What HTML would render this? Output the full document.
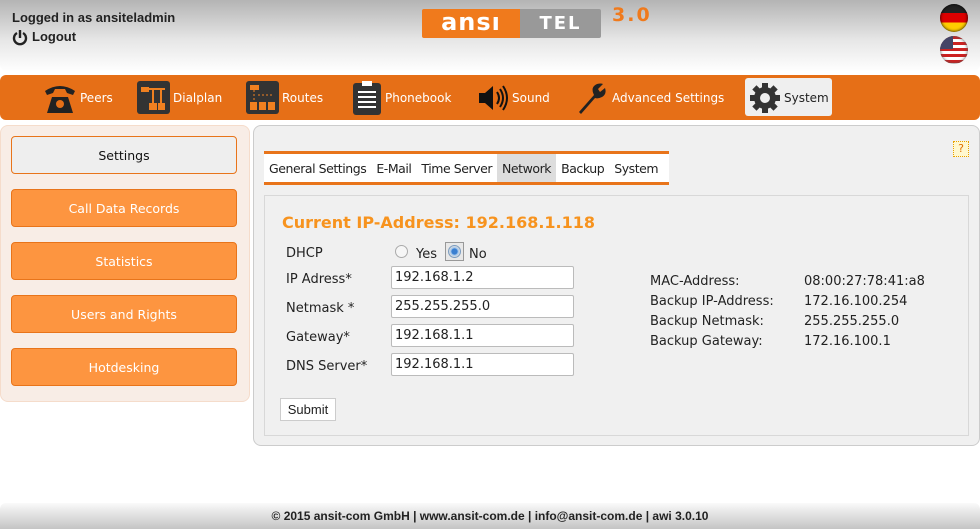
<!DOCTYPE html>
<html><head><meta charset="utf-8"><style>
*{box-sizing:border-box;margin:0;padding:0}
body{width:980px;height:529px;overflow:hidden;background:#fff;font-family:"DejaVu Sans",Verdana,sans-serif;font-size:13px;color:#222;position:relative}
.hdr{position:absolute;left:0;top:0;width:980px;height:72px;background:linear-gradient(#b4b4b4,#e6e6e6 55%,#fff);border-radius:0 0 8px 8px}
.b{font-family:"Liberation Sans",sans-serif;font-weight:bold;font-size:13px;position:absolute;white-space:nowrap}
.nav{position:absolute;left:0;top:75px;width:980px;height:45px;background:#e66f17;border-radius:6px}
.ni{position:absolute;top:0;height:45px;display:flex;align-items:center;color:#fff;font-size:12px;white-space:nowrap}
.ni svg{margin-right:3px}
.sys{position:absolute;left:745px;top:78px;width:87px;height:38px;background:#efefef;border-radius:3px}
.side{position:absolute;left:0;top:125px;width:250px;height:277px;background:#f8ede6;border:1px solid #f5dccb;border-radius:8px}
.btn{position:absolute;left:11px;width:226px;height:38px;background:#fd9540;border:1px solid #e8741a;border-radius:4px;color:#fff;text-align:center;line-height:38px;font-size:12.5px}
.main{position:absolute;left:253px;top:125px;width:727px;height:321px;background:#f0f0f0;border:1px solid #ccc;border-radius:8px}
.tabs{position:absolute;left:264px;top:151px;width:405px;height:34px;background:#fff;border-top:3px solid #e8741a;border-bottom:3px solid #e8741a;display:flex;align-items:center;white-space:nowrap;font-size:12.5px;letter-spacing:-0.45px;overflow:hidden}
.tabs span{padding:0 5px;height:28px;line-height:30px}
.inner{position:absolute;left:264px;top:195px;width:705px;height:241px;border:1px solid #d8d8d8}
.lbl{position:absolute;left:286px}
.inp{position:absolute;left:391px;width:183px;height:23px;background:#fff;border:1px solid #bbb;border-radius:2px;padding-left:3px;line-height:21px}
.r{position:absolute;left:650px}.r2{position:absolute;left:804px}
</style></head><body>
<div class="hdr"></div>
<div class="b" style="left:12px;top:10px">Logged in as ansiteladmin</div>
<svg style="position:absolute;left:12px;top:29px" width="16" height="17" viewBox="0 0 16 17"><path d="M5 4A6 6 0 1 0 11 4" fill="none" stroke="#222" stroke-width="2.4"/><path d="M8 1V9" stroke="#222" stroke-width="2.4"/></svg>
<div class="b" style="left:32px;top:29px">Logout</div>
<div style="position:absolute;left:422px;top:9px;width:98px;height:29px;background:#f07a1c;border-radius:2px 0 0 2px;color:#fff;font:bold 24px 'DejaVu Sans',sans-serif;line-height:27px;text-align:center;letter-spacing:1px">ansı</div>
<div style="position:absolute;left:520px;top:9px;width:81px;height:29px;background:#999;border-radius:0 2px 2px 0;color:#fff;font:bold 18px 'DejaVu Sans',sans-serif;line-height:29px;text-align:center;letter-spacing:2px">TEL</div>
<div style="position:absolute;left:612px;top:4px;color:#f07a1c;font:bold 19px 'DejaVu Sans',sans-serif;letter-spacing:2px">3.0</div>
<div style="position:absolute;left:940px;top:4px;width:28px;height:28px;border-radius:50%;background:linear-gradient(#222 33%,#d00 33%,#d00 66%,#fc0 66%);box-shadow:inset 0 0 3px #000"></div>
<div style="position:absolute;left:940px;top:36px;width:28px;height:28px;border-radius:50%;background:repeating-linear-gradient(#c22 0 3px,#fff 3px 6px);box-shadow:inset 0 0 3px #555;overflow:hidden"><div style="width:13px;height:13px;background:#446"></div></div>
<div class="nav"></div>
<div class="sys"></div>
<div class="ni" style="left:43px;top:75px"><svg width="34" height="34" viewBox="0 0 34 34"><path d="M2 10Q17 0 32 10L30 14L24 12L22 8H12L10 12L4 14Z" fill="#222"/><path d="M9 16H25L30 32H4Z" fill="#222"/><circle cx="17" cy="23" r="4" fill="#e66f17"/></svg>Peers</div>
<div class="ni" style="left:137px;top:75px"><svg width="33" height="33" viewBox="0 0 33 33"><rect width="33" height="33" rx="3" fill="#333"/><rect x="4" y="6" width="8" height="5" fill="#f08020"/><path d="M12 8H28M16 8V24M24 8V24" stroke="#f08020" stroke-width="2"/><rect x="12" y="22" width="8" height="7" fill="#f08020"/><rect x="21" y="22" width="7" height="7" fill="#f08020"/></svg>Dialplan</div>
<div class="ni" style="left:246px;top:75px"><svg width="33" height="33" viewBox="0 0 33 33"><rect width="33" height="33" rx="3" fill="#333"/><rect x="4" y="4" width="9" height="5" fill="#f08020"/><path d="M8 9V20M12 14H28" stroke="#f08020" stroke-dasharray="2 2"/><rect x="4" y="21" width="7" height="8" fill="#f08020"/><rect x="13" y="21" width="7" height="8" fill="#f08020"/><rect x="22" y="21" width="7" height="8" fill="#f08020"/></svg>Routes</div>
<div class="ni" style="left:352px;top:75px"><svg width="30" height="36" viewBox="0 0 30 36"><rect x="1" y="3" width="28" height="32" rx="3" fill="#333"/><rect x="10" y="1" width="10" height="5" fill="#fff"/><path d="M6 12H24M6 17H24M6 22H24M6 27H24" stroke="#fff" stroke-width="2"/></svg>Phonebook</div>
<div class="ni" style="left:477px;top:75px"><svg width="32" height="30" viewBox="0 0 32 30"><path d="M2 10H8L16 3V27L8 20H2Z" fill="#111"/><path d="M20 9Q24 15 20 21M23 6Q29 15 23 24M26 3Q34 15 26 27" fill="none" stroke="#111" stroke-width="2"/></svg>Sound</div>
<div class="ni" style="left:575px;top:75px"><svg width="34" height="34" viewBox="0 0 34 34"><path d="M4 31L19 14Q15 6 22 3Q26 2 28 3L23 8L25 11L30 7Q32 13 27 16Q23 18 20 17L6 33Z" fill="#222"/></svg>Advanced Settings</div>
<div class="ni" style="left:749px;top:75px;color:#222"><svg width="32" height="32" viewBox="0 0 32 32"><g fill="#333"><circle cx="16" cy="16" r="11"/><rect x="13" y="1" width="6" height="30"/><rect x="1" y="13" width="30" height="6"/><rect x="13" y="1" width="6" height="30" transform="rotate(45 16 16)"/><rect x="13" y="1" width="6" height="30" transform="rotate(-45 16 16)"/></g><circle cx="16" cy="16" r="5" fill="#efefef"/></svg>System</div>

<div class="side"></div>
<div class="btn" style="top:136px;background:#eee;color:#111">Settings</div>
<div class="btn" style="top:189px">Call Data Records</div>
<div class="btn" style="top:242px">Statistics</div>
<div class="btn" style="top:295px">Users and Rights</div>
<div class="btn" style="top:348px">Hotdesking</div>

<div class="main"></div>
<div style="position:absolute;left:953px;top:141px;width:16px;height:16px;background:#fff8d0;border:1px dotted #e8a000;color:#e07000;font-size:11px;text-align:center;line-height:14px">?</div>
<div class="tabs"><span>General Settings</span><span>E-Mail</span><span>Time Server</span><span style="background:#ddd">Network</span><span>Backup</span><span>System</span></div>
<div class="inner"></div>
<div style="position:absolute;left:282px;top:213px;color:#f7931e;font-weight:bold;font-size:16px">Current IP-Address: 192.168.1.118</div>
<div class="lbl" style="top:246px">DHCP</div>
<div style="position:absolute;left:395px;top:245px;width:13px;height:13px;border-radius:50%;border:1px solid #aaa;background:#f6f6f6"></div>
<div style="position:absolute;left:416px;top:247px">Yes</div>
<div style="position:absolute;left:445px;top:242px;width:19px;height:19px;border:1px solid #999;background:#e8e8e8"><div style="margin:2px;width:13px;height:13px;border-radius:50%;background:radial-gradient(#3a7fd0 35%,#9cc4ee 45%,#ddd 70%);border:1px solid #7a9cc0"></div></div>
<div style="position:absolute;left:469px;top:247px">No</div>
<div class="lbl" style="top:272px">IP Adress*</div><div class="inp" style="top:266px">192.168.1.2</div>
<div class="lbl" style="top:301px">Netmask *</div><div class="inp" style="top:295px">255.255.255.0</div>
<div class="lbl" style="top:330px">Gateway*</div><div class="inp" style="top:324px">192.168.1.1</div>
<div class="lbl" style="top:359px">DNS Server*</div><div class="inp" style="top:353px">192.168.1.1</div>
<div class="r" style="top:274px">MAC-Address:</div><div class="r2" style="top:274px">08:00:27:78:41:a8</div>
<div class="r" style="top:294px">Backup IP-Address:</div><div class="r2" style="top:294px">172.16.100.254</div>
<div class="r" style="top:314px">Backup Netmask:</div><div class="r2" style="top:314px">255.255.255.0</div>
<div class="r" style="top:334px">Backup Gateway:</div><div class="r2" style="top:334px">172.16.100.1</div>
<div style="position:absolute;left:280px;top:398px;width:56px;height:23px;background:#fff;border:1px solid #ccc;font-family:'Liberation Sans',sans-serif;font-size:13px;text-align:center;line-height:21px">Submit</div>

<div style="position:absolute;left:0;top:503px;width:980px;height:26px;background:linear-gradient(#fafafa,#c4c4c4);border-radius:6px 6px 0 0"></div>
<div class="b" style="left:0;width:980px;top:509px;text-align:center;font-size:12px;letter-spacing:0">© 2015 ansit-com GmbH | www.ansit-com.de | info@ansit-com.de | awi 3.0.10</div>
</body></html>
